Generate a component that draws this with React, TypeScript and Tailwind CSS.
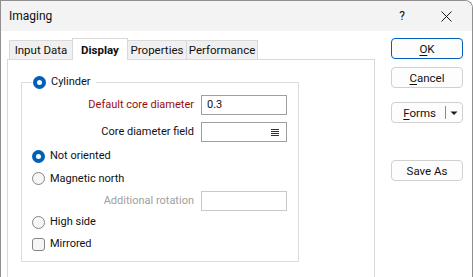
import React from 'react';

const Radio: React.FC<{ checked?: boolean }> = ({ checked }) =>
  checked ? (
    <span className="w-[13px] h-[13px] rounded-full bg-[#005fb8] flex items-center justify-center shrink-0">
      <span className="w-[5px] h-[5px] rounded-full bg-white" />
    </span>
  ) : (
    <span className="w-[13px] h-[13px] rounded-full border border-[#858585] bg-[#f6f6f6] shrink-0" />
  );

const Check: React.FC = () => (
  <span className="w-[13px] h-[13px] rounded-[3px] border border-[#858585] bg-[#f6f6f6] shrink-0" />
);

const ListIcon: React.FC = () => (
  <svg width="8" height="7" viewBox="0 0 8 7" className="shrink-0">
    <path d="M0 0.5H8M0 2.5H8M0 4.5H8M0 6.5H8" stroke="#333" strokeWidth="1" />
  </svg>
);

const tabBase = 'h-[19px] -ml-px bg-[#f0f0f0] border border-b-0 border-[#d9d9d9] flex items-center justify-center';

const Button: React.FC<{ children: React.ReactNode; primary?: boolean; className?: string }> = ({
  children,
  primary,
  className,
}) => (
  <div
    className={
      'w-[72px] h-[21px] rounded-[4px] bg-[#fdfdfd] flex items-center justify-center ' +
      (primary ? 'border border-[#005fb8] ' : 'border border-[#d0d0d0] ') +
      (className ?? '')
    }
  >
    {children}
  </div>
);

export default function App() {
  return (
    <div className="w-[473px] h-[277px] overflow-hidden bg-white border border-b-0 border-[#8f8f8f] rounded-tr-[8px] font-['Roboto',sans-serif] text-[11.5px] text-[#111] leading-[16px]">
      {/* title bar */}
      <div className="h-[30px] bg-[#f3f3f3] flex items-center pl-[8px] text-[12px]">
        <span className="flex-1">Imaging</span>
        <span className="w-[14px] text-center mr-[32px]">?</span>
        <svg width="11" height="11" viewBox="0 0 11 11" className="mr-[20px]">
          <path d="M0.5 0.5L10.5 10.5M10.5 0.5L0.5 10.5" stroke="#1a1a1a" strokeWidth="1" />
        </svg>
      </div>

      <div className="flex">
        {/* tabs + panel */}
        <div className="pl-[6px] pt-[7px]">
          <div className="flex items-end h-[21px] pl-[2px]">
            <div className="h-[19px] w-[64px] bg-[#f0f0f0] border border-b-0 border-[#d9d9d9] flex items-center justify-center">
              Input Data
            </div>
            <div className="relative z-10 -mb-px h-[22px] w-[56px] -ml-px bg-white border border-b-0 border-[#d9d9d9] flex items-center justify-center font-bold">
              Display
            </div>
            <div className={tabBase + ' w-[60px]'}>Properties</div>
            <div className={tabBase + ' w-[72px]'}>Performance</div>
          </div>
          <div className="w-[368px] h-[230px] border border-[#d9d9d9] bg-white pl-[13px] pt-[14px] text-[11px]">
            <fieldset className="w-[278px] border border-[#dcdcdc] pl-[10px] pb-[6px]">
              <legend className="px-[1px] pr-[5px] h-[16px] flex items-center gap-[5px]">
                <Radio checked />
                <span>Cylinder</span>
              </legend>
              <div className="mt-[4px] h-[22px] flex items-center">
                <span className="w-[169px] text-right text-[#9a0c0c] pr-[7px]">Default core diameter</span>
                <div className="w-[86px] h-[20px] border border-[#a0a0a0] flex items-center pl-[5px]">0.3</div>
              </div>
              <div className="mt-[5px] h-[22px] flex items-center">
                <span className="w-[169px] text-right pr-[7px]">Core diameter field</span>
                <div className="w-[86px] h-[20px] border border-[#a0a0a0] flex items-center justify-end pr-[7px]">
                  <ListIcon />
                </div>
              </div>
              <div className="mt-[2px] h-[22px] flex items-center gap-[5px]">
                <Radio checked />
                <span>Not oriented</span>
              </div>
              <div className="h-[23px] flex items-center gap-[5px]">
                <Radio />
                <span>Magnetic north</span>
              </div>
              <div className="h-[21px] flex items-center">
                <span className="w-[169px] text-right text-[#a0a0a0] pr-[7px]">Additional rotation</span>
                <div className="w-[86px] h-[20px] border border-[#c8c8c8]" />
              </div>
              <div className="h-[22px] flex items-center gap-[5px]">
                <Radio />
                <span>High side</span>
              </div>
              <div className="h-[22px] flex items-center gap-[5px]">
                <Check />
                <span>Mirrored</span>
              </div>
            </fieldset>
          </div>
        </div>

        {/* buttons */}
        <div className="ml-[16px] pt-[7px] flex flex-col">
          <Button primary>
            <span className="underline underline-offset-2">O</span>K
          </Button>
          <Button className="mt-[8px]">
            <span className="underline underline-offset-2">C</span>ancel
          </Button>
          <div className="mt-[14px] w-[72px] h-[21px] rounded-[4px] bg-[#fdfdfd] border border-[#d0d0d0] flex items-center">
            <span className="flex-1 text-right pr-[9px]">
              <span className="underline underline-offset-2">F</span>orms
            </span>
            <span className="w-px h-[13px] bg-[#8a8a8a]" />
            <svg width="16" height="8" viewBox="0 0 16 8">
              <path d="M4.5 2.5H11.5L8 6Z" fill="#1a1a1a" />
            </svg>
          </div>
          <Button className="mt-[37px]">Save As</Button>
        </div>
      </div>
    </div>
  );
}
